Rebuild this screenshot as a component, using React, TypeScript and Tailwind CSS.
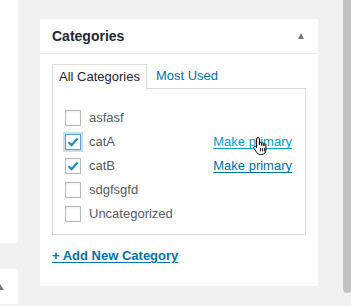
import React from 'react';

type Cat = { name: string; checked: boolean; focused?: boolean; primary?: 'hover' | 'link' };

const cats: Cat[] = [
  { name: 'asfasf', checked: false },
  { name: 'catA', checked: true, focused: true, primary: 'hover' },
  { name: 'catB', checked: true, primary: 'link' },
  { name: 'sdgfsgfd', checked: false },
  { name: 'Uncategorized', checked: false },
];

function Checkbox({ checked, focused }: { checked: boolean; focused?: boolean }) {
  return (
    <span
      className={`w-4 h-4 flex items-center justify-center bg-white border shrink-0 ${
        focused
          ? 'border-[#5b9dd9] shadow-[0_0_0_2px_rgba(30,140,190,0.25)]'
          : 'border-[#b4b9be] shadow-[inset_0_1px_2px_rgba(0,0,0,0.07)]'
      }`}
    >
      {checked && (
        <svg width="14" height="14" viewBox="0 0 14 14">
          <path d="M2.5 7.2 L5.6 10.2 L11.6 3.4" fill="none" stroke="#1e8cbe" strokeWidth="2.2" />
        </svg>
      )}
    </span>
  );
}

function HandCursor() {
  return (
    <svg className="absolute left-[-6px] top-[4px]" width="16" height="20" viewBox="0 0 16 20">
      <path
        d="M5 1.5c.8 0 1.4.6 1.4 1.4V9l.2-2.2c.3-.9 1.8-.9 2 0V9.5l.2-2c.3-.9 1.8-.9 2 0v2.3l.2-1.4c.3-.8 1.7-.8 1.9.1V14c0 2.5-1.8 4.5-4.3 4.5H7.2c-1.4 0-2.5-.7-3.3-1.8L1.1 12.5c-.5-.7-.3-1.6.4-2 .6-.3 1.3-.1 1.7.4L3.6 11.7V2.9c0-.8.6-1.4 1.4-1.4z"
        fill="#fff"
        stroke="#000"
        strokeWidth="1"
      />
      <path d="M7.6 12v3.4M9.6 12v3.4M11.6 12v3.4" stroke="#000" strokeWidth="0.9" />
    </svg>
  );
}

export default function App() {
  return (
    <div
      className="w-[351px] h-[306px] bg-[#f1f1f1] flex overflow-hidden text-[13px] text-[#555d66]"
      style={{ fontFamily: '"Liberation Sans", Arial, sans-serif' }}
    >
      <div className="w-[18px] flex flex-col shrink-0">
        <div className="h-[243px] bg-white" />
        <div className="mt-[26px] h-[35px] bg-white flex items-center">
          <span className="w-0 h-0 border-x-[4px] border-x-transparent border-b-[6px] border-b-[#72777c] -ml-[4px]" />
        </div>
      </div>

      <div className="ml-[22px] mt-[19px] w-[278px] h-[267px] bg-white shrink-0 flex flex-col">
        <div className="h-[35px] border-b border-[#eee] flex items-center justify-between pl-3 pr-[14px]">
          <span className="text-[14px] font-semibold text-[#23282d]">Categories</span>
          <span className="w-0 h-0 border-x-[3.5px] border-x-transparent border-b-[6px] border-b-[#72777c]" />
        </div>

        <div className="px-3 pt-[10px]">
          <div className="flex items-end h-[24px]">
            <div className="h-[25px] px-[6px] border border-b-0 border-[#ddd] bg-white flex items-center text-[#23282d] relative z-10 -mb-px">
              All Categories
            </div>
            <div className="px-[9px] h-[24px] flex items-center text-[#0073aa]">Most Used</div>
          </div>
          <div className="w-[254px] h-[147px] border border-[#ddd] pl-3 pr-[13px] pt-[17px] flex flex-col">
            {cats.map((c) => (
              <div key={c.name} className="h-[24px] flex items-center">
                <Checkbox checked={c.checked} focused={c.focused} />
                <span className="ml-2 text-[#555d66]">{c.name}</span>
                {c.primary && (
                  <span
                    className={`ml-auto underline underline-offset-2 relative ${
                      c.primary === 'hover' ? 'text-[#00a0d2]' : 'text-[#0073aa]'
                    }`}
                  >
                    Make primary
                    {c.primary === 'hover' && (
                      <span className="absolute left-[46px] top-0">
                        <HandCursor />
                      </span>
                    )}
                  </span>
                )}
              </div>
            ))}
          </div>
          <div className="mt-[11px] font-semibold text-[#0073aa] underline underline-offset-2">
            + Add New Category
          </div>
        </div>
      </div>

      <div className="ml-[25px] w-[8px] h-[293px] bg-[#c1c1c1] rounded-b-[4px] shrink-0" />
    </div>
  );
}
